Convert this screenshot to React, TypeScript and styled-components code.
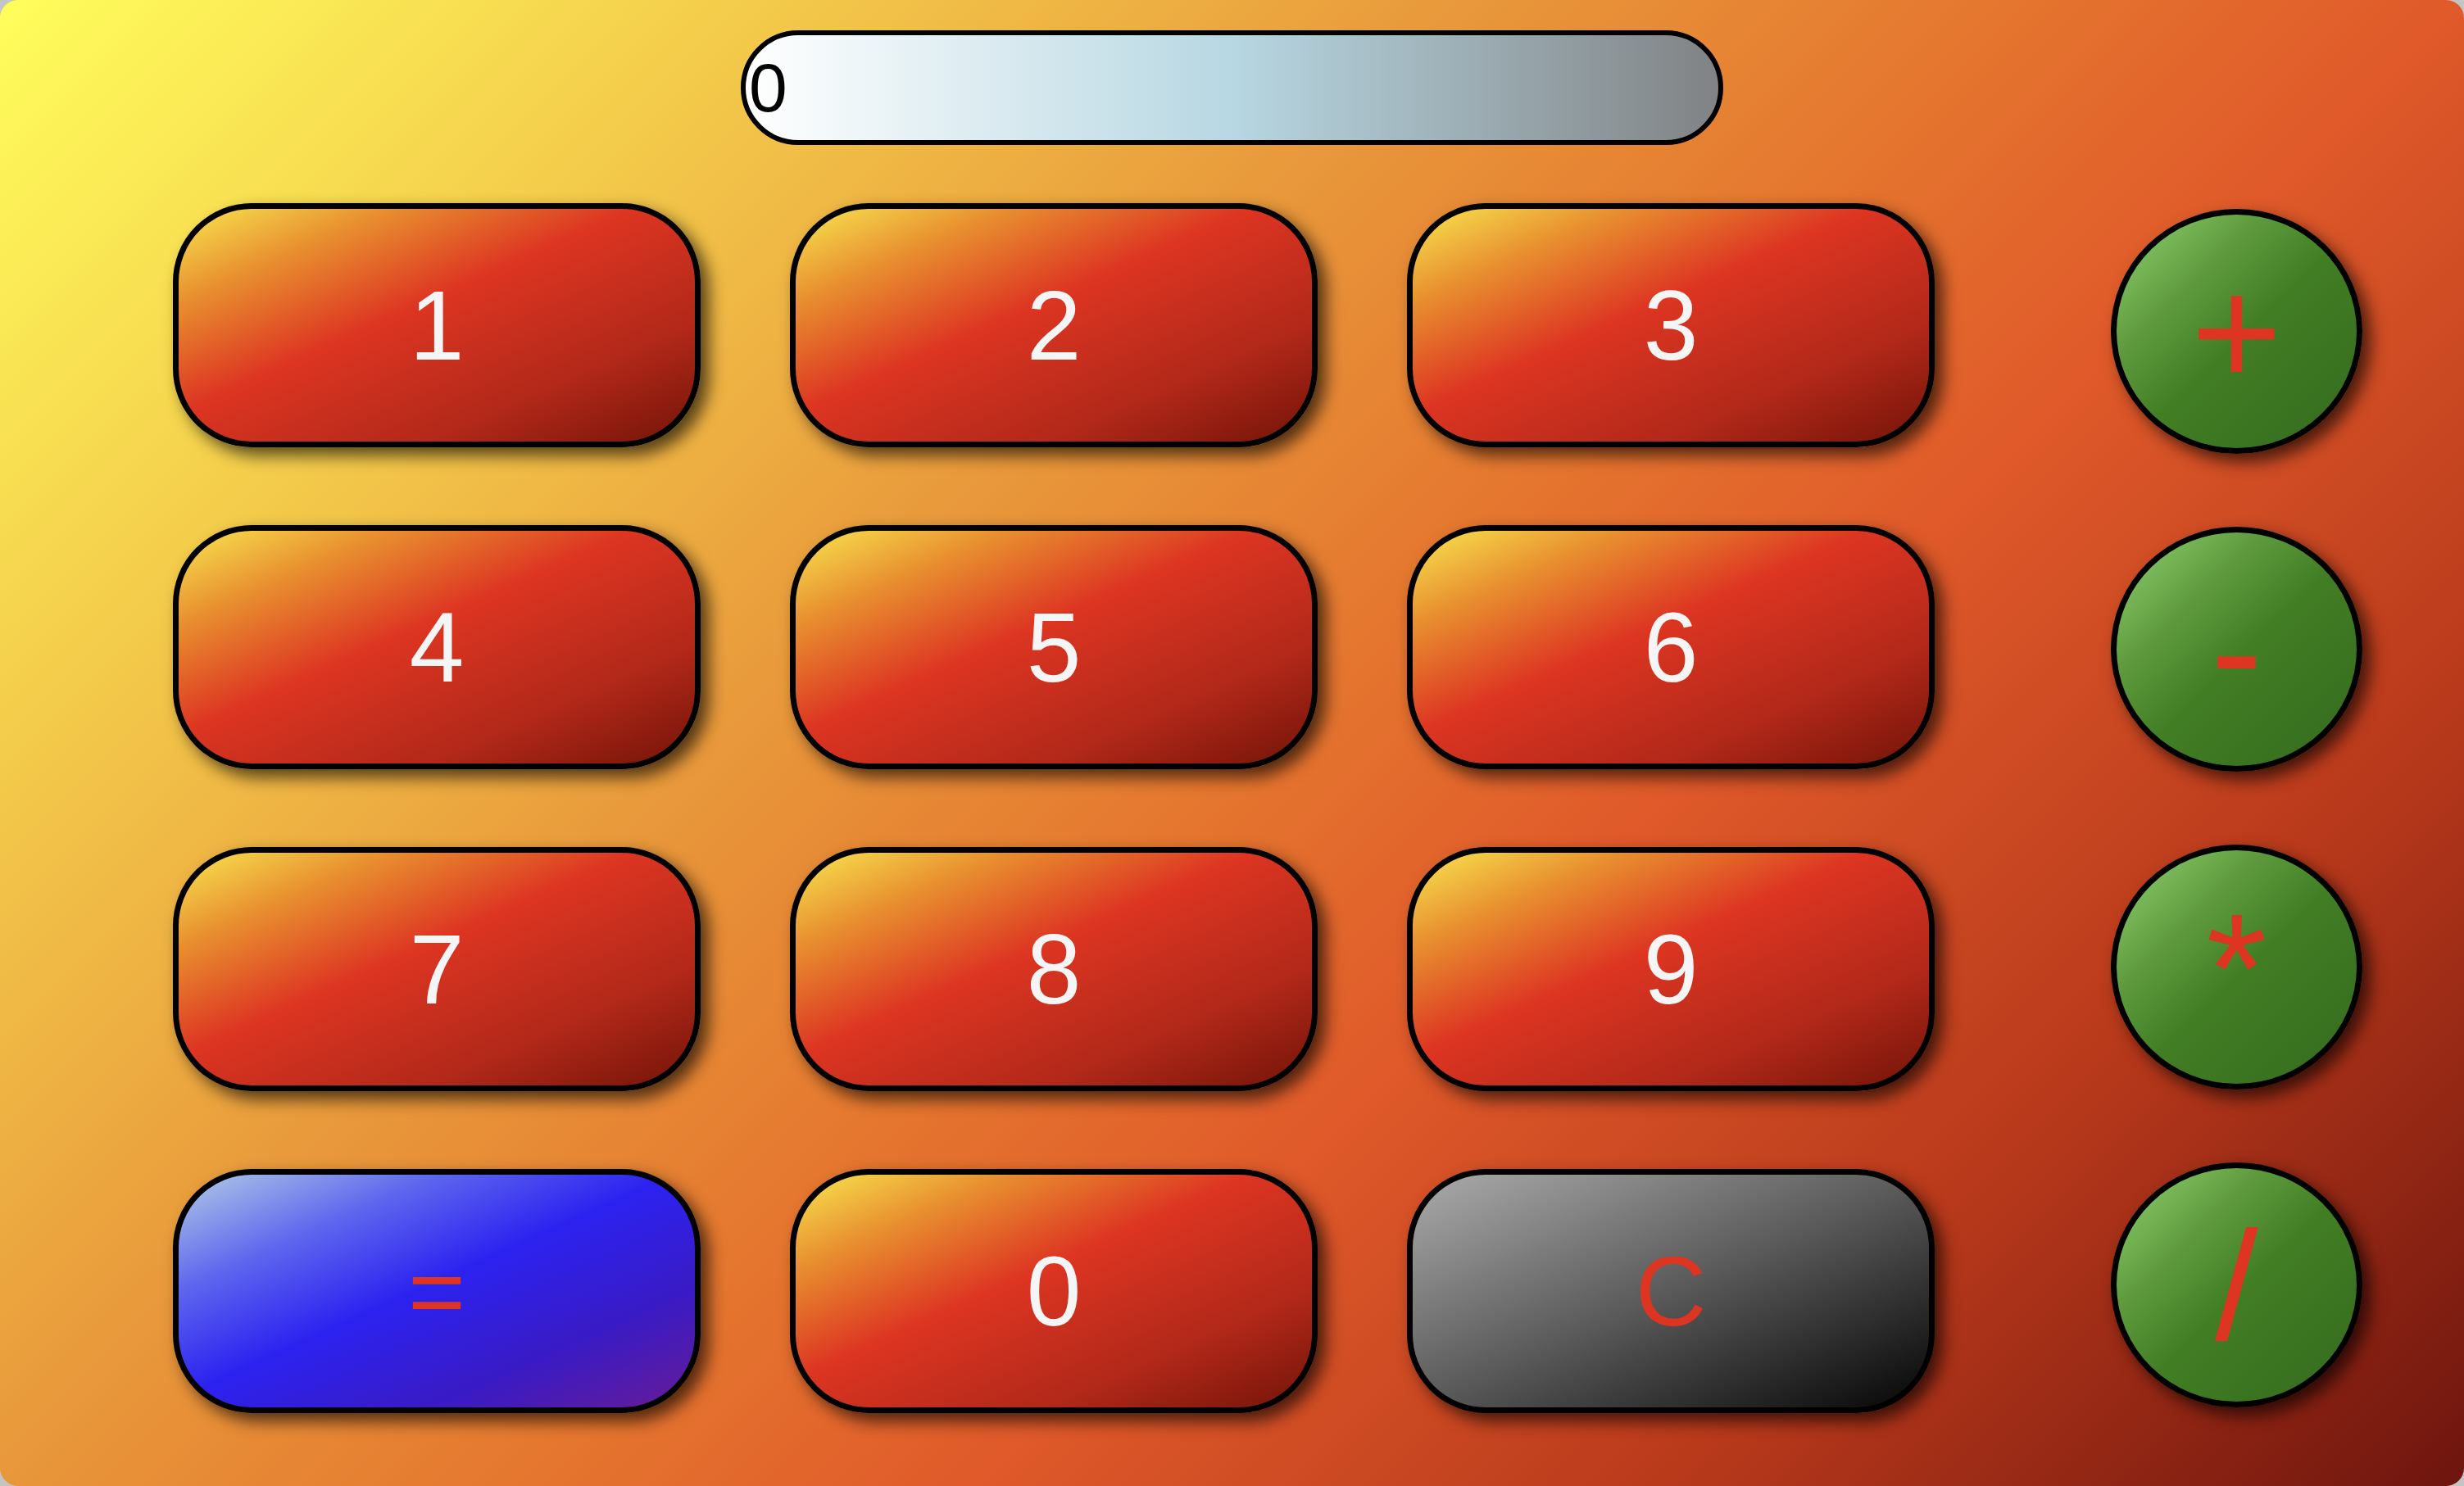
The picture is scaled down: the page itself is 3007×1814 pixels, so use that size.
import React, { useState } from "react";
import styled, { createGlobalStyle } from "styled-components";

const GlobalStyle = createGlobalStyle`
  html, body {
    margin: 0;
    padding: 0;
    background: #c4c4c4;
  }
  body {
    font-family: "Liberation Sans", Arial, sans-serif;
  }
  * { box-sizing: border-box; }
`;

const Page = styled.div`
  width: 3007px;
  height: 1814px;
  border-radius: 22px;
  overflow: hidden;
  background: linear-gradient(
    135deg,
    #fffe5c 0%,
    #f3c94a 20%,
    #e8963a 38%,
    #e5782f 50%,
    #e05a2a 62%,
    #b8391b 80%,
    #6e150e 100%
  );
  display: flex;
  flex-direction: column;
  align-items: center;
  padding-top: 37px;
`;

const Display = styled.div`
  width: 1199px;
  height: 140px;
  border: 6px solid #000;
  border-radius: 72px;
  background: linear-gradient(to right, #ffffff 0%, #b7d7e2 50%, #808284 100%);
  display: flex;
  align-items: center;
  padding-left: 4px;
  font-family: "Liberation Sans", Arial, sans-serif;
  font-size: 84px;
  color: #000;
  overflow: hidden;
`;

const KeyArea = styled.div`
  align-self: stretch;
  display: flex;
  align-items: flex-start;
  padding: 71px 0 0 211px;
  gap: 215px;
`;

const Keys = styled.div`
  display: grid;
  grid-template-columns: repeat(3, 644px);
  grid-auto-rows: 298px;
  column-gap: 109px;
  row-gap: 95px;
`;

const Ops = styled.div`
  display: flex;
  flex-direction: column;
  gap: 89px;
  padding-top: 7px;
`;

type Variant = "num" | "eq" | "clear";

const gradients: Record<Variant, string> = {
  num: "linear-gradient(to bottom right, #f8e650 0%, #e8902f 20%, #dd3522 44%, #b12819 75%, #731408 100%)",
  eq: "linear-gradient(to bottom right, #b2cbe6 0%, #5e66ee 25%, #2c22f0 48%, #3a1bc4 75%, #661b97 100%)",
  clear: "linear-gradient(to bottom right, #ababab 0%, #5a5a5a 50%, #050505 100%)",
};

const KeyButton = styled.button<{ $variant: Variant }>`
  width: 644px;
  height: 298px;
  border: 7px solid #000;
  border-radius: 96px;
  background: ${(p) => gradients[p.$variant]};
  color: ${(p) => (p.$variant === "num" ? "#f5f5f5" : "#dd3522")};
  font-family: "Liberation Sans", Arial, sans-serif;
  font-size: 120px;
  line-height: 1;
  display: flex;
  align-items: center;
  justify-content: center;
  padding: 0;
  cursor: pointer;
  box-shadow: 10px 10px 20px rgba(0, 0, 0, 0.65);
`;

const OpButton = styled.button`
  width: 307px;
  height: 299px;
  border: 7px solid #000;
  border-radius: 50%;
  background: linear-gradient(to bottom right, #92d474 0%, #5f9b3e 30%, #427e24 52%, #336a1d 100%);
  color: #dd3522;
  font-family: "Liberation Sans", Arial, sans-serif;
  font-size: 190px;
  line-height: 1;
  display: flex;
  align-items: center;
  justify-content: center;
  padding: 0;
  cursor: pointer;
  box-shadow: 10px 10px 20px rgba(0, 0, 0, 0.65);
`;

type Key = { label: string; kind: Variant };

const keys: Key[] = [
  { label: "1", kind: "num" },
  { label: "2", kind: "num" },
  { label: "3", kind: "num" },
  { label: "4", kind: "num" },
  { label: "5", kind: "num" },
  { label: "6", kind: "num" },
  { label: "7", kind: "num" },
  { label: "8", kind: "num" },
  { label: "9", kind: "num" },
  { label: "=", kind: "eq" },
  { label: "0", kind: "num" },
  { label: "C", kind: "clear" },
];

const ops = ["+", "-", "*", "/"];

export default function App() {
  const [value, setValue] = useState("0");

  const pressKey = (k: Key) => {
    if (k.kind === "clear") {
      setValue("0");
      return;
    }
    if (k.kind === "eq") {
      try {
        const r = Function(`"use strict"; return (${value})`)();
        setValue(String(r));
      } catch {
        setValue("0");
      }
      return;
    }
    setValue((v) => (v === "0" ? k.label : v + k.label));
  };

  const pressOp = (op: string) => setValue((v) => v + op);

  return (
    <>
      <GlobalStyle />
      <Page>
        <Display>{value}</Display>
        <KeyArea>
          <Keys>
            {keys.map((k) => (
              <KeyButton key={k.label} $variant={k.kind} onClick={() => pressKey(k)}>
                {k.label}
              </KeyButton>
            ))}
          </Keys>
          <Ops>
            {ops.map((op) => (
              <OpButton key={op} onClick={() => pressOp(op)}>
                {op}
              </OpButton>
            ))}
          </Ops>
        </KeyArea>
      </Page>
    </>
  );
}
